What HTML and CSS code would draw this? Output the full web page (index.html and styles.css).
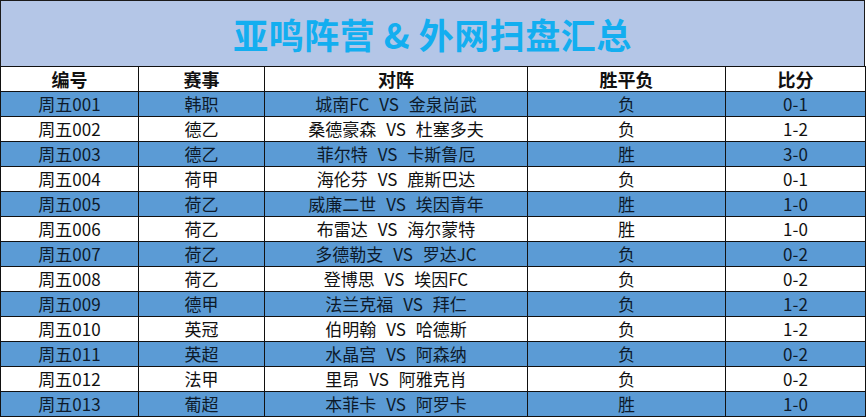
FILE: index.html
```html
<!DOCTYPE html>
<html lang="zh">
<head>
<meta charset="utf-8">
<link rel="stylesheet" href="styles.css">
</head>
<body>
<div class="sheet">
  <div class="title">亚鸣阵营 &amp; 外网扫盘汇总</div>
  <table class="grid">
    <colgroup>
      <col class="c1"><col class="c2"><col class="c3"><col class="c4"><col class="c5">
    </colgroup>
    <thead>
      <tr><th>编号</th><th>赛事</th><th>对阵</th><th>胜平负</th><th>比分</th></tr>
    </thead>
    <tbody>
      <tr class="blue"><td>周五001</td><td>韩职</td><td class="vs">城南FC VS 金泉尚武</td><td>负</td><td>0-1</td></tr>
      <tr><td>周五002</td><td>德乙</td><td class="vs">桑德豪森 VS 杜塞多夫</td><td>负</td><td>1-2</td></tr>
      <tr class="blue"><td>周五003</td><td>德乙</td><td class="vs">菲尔特 VS 卡斯鲁厄</td><td>胜</td><td>3-0</td></tr>
      <tr><td>周五004</td><td>荷甲</td><td class="vs">海伦芬 VS 鹿斯巴达</td><td>负</td><td>0-1</td></tr>
      <tr class="blue"><td>周五005</td><td>荷乙</td><td class="vs">威廉二世 VS 埃因青年</td><td>胜</td><td>1-0</td></tr>
      <tr><td>周五006</td><td>荷乙</td><td class="vs">布雷达 VS 海尔蒙特</td><td>胜</td><td>1-0</td></tr>
      <tr class="blue"><td>周五007</td><td>荷乙</td><td class="vs">多德勒支 VS 罗达JC</td><td>负</td><td>0-2</td></tr>
      <tr><td>周五008</td><td>荷乙</td><td class="vs">登博思 VS 埃因FC</td><td>负</td><td>0-2</td></tr>
      <tr class="blue"><td>周五009</td><td>德甲</td><td class="vs">法兰克福 VS 拜仁</td><td>负</td><td>1-2</td></tr>
      <tr><td>周五010</td><td>英冠</td><td class="vs">伯明翰 VS 哈德斯</td><td>负</td><td>1-2</td></tr>
      <tr class="blue"><td>周五011</td><td>英超</td><td class="vs">水晶宫 VS 阿森纳</td><td>负</td><td>0-2</td></tr>
      <tr><td>周五012</td><td>法甲</td><td class="vs">里昂 VS 阿雅克肖</td><td>负</td><td>0-2</td></tr>
      <tr class="blue"><td>周五013</td><td>葡超</td><td class="vs">本菲卡 VS 阿罗卡</td><td>胜</td><td>1-0</td></tr>
    </tbody>
  </table>
</div>
</body>
</html>
```
FILE: styles.css
```css
html, body {
  margin: 0;
  padding: 0;
  background: #ffffff;
}
.sheet {
  width: 865px;
}
.title {
  box-sizing: border-box;
  height: 66px;
  border: 1px solid #1a1a1a;
  border-bottom: none;
  background: #b4c6e7;
  color: #13aef0;
  font-family: "Noto Sans CJK SC", sans-serif;
  font-weight: 700;
  font-size: 35px;
  line-height: 65px;
  text-align: center;
  letter-spacing: 0.5px;
}
.grid {
  width: 865px;
  border-collapse: collapse;
  table-layout: fixed;
  font-family: "Noto Sans CJK SC", sans-serif;
  font-size: 17px;
  color: #111;
}
.c1 { width: 138px; }
.c2 { width: 126px; }
.c3 { width: 263px; }
.c4 { width: 198px; }
.c5 { width: 140px; }
.grid th, .grid td {
  border: 1px solid #111;
  height: 24px;
  padding: 0;
  text-align: center;
  line-height: 24px;
  white-space: nowrap;
}
.grid td.vs {
  word-spacing: 6px;
}
.grid th {
  font-weight: 700;
  font-size: 18px;
  background: #ffffff;
}
.grid tr.blue td {
  background: #5b9bd5;
  color: #0d1a2a;
}
```
